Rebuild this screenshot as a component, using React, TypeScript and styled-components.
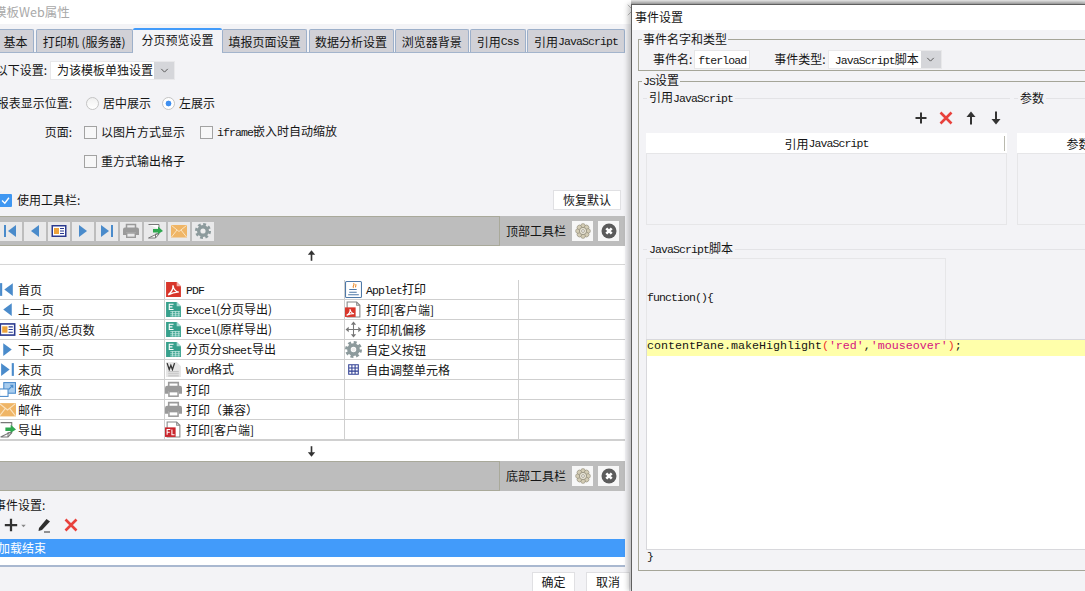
import React from 'react';
import styled, { createGlobalStyle } from 'styled-components';

const GlobalStyle = createGlobalStyle`
  html, body {
    margin: 0;
    padding: 0;
    background: #fff;
  }
  body {
    font-family: "Noto Sans CJK SC", "Liberation Sans", sans-serif;
    font-size: 12px;
    line-height: 16px;
    color: #151515;
  }
  * {
    box-sizing: border-box;
  }
`;

const Page = styled.div`
  display: flex;
  width: 1085px;
  height: 591px;
  overflow: hidden;
  background: #fff;
`;

/* ---------- left window ---------- */

const LeftWindow = styled.div`
  width: 631px;
  flex-shrink: 0;
  overflow: hidden;
`;

const LeftInner = styled.div`
  width: 638px;
  height: 591px;
  margin-left: -6px;
  display: flex;
  flex-direction: column;
`;

const TitleBar = styled.div`
  height: 24px;
  flex-shrink: 0;
  display: flex;
  align-items: center;
  justify-content: space-between;
  color: #a9a9a9;
  font-size: 12.5px;
  background: #fff;

  svg {
    margin-right: -8px;
    margin-top: -4px;
  }
`;

const LeftBody = styled.div`
  flex: 1;
  background: #f3f3f6;
  display: flex;
  flex-direction: column;
`;

const TabStrip = styled.div`
  height: 29px;
  padding: 5px 0 0 3px;
  display: flex;
  gap: 1.5px;
  border-bottom: 1px solid #a3b4cc;
  width: 631px;
`;

const Tab = styled.div<{ $w: number; $active?: boolean }>`
  width: ${(p) => p.$w}px;
  padding-top: 1px;
  display: flex;
  align-items: center;
  justify-content: center;
  white-space: nowrap;
  border: 1px solid #9db0ca;
  border-bottom: none;
  border-radius: 2px 2px 0 0;
  background: #d1d1d7;

  ${(p) =>
    p.$active &&
    `
    background: #f3f3f6;
    margin: -1px -1.5px -1px;
    padding: 0 0 4px;
    border: none;
    border-top: 2px solid #429bfa;
    position: relative;
  `}
`;

const Latin = styled.span`
  font-family: "Liberation Mono", monospace;
  font-size: 11.5px;
  letter-spacing: -0.9px;
`;

const FormRow = styled.div<{ $top: number; $indent?: number }>`
  height: 20px;
  margin-top: ${(p) => p.$top}px;
  padding-left: ${(p) => p.$indent ?? 0}px;
  display: flex;
  align-items: center;
  flex-shrink: 0;
  white-space: nowrap;
`;

const FieldLabel = styled.span<{ $w: number }>`
  width: ${(p) => p.$w}px;
  flex-shrink: 0;
  text-align: right;
`;

const SelectBox = styled.div<{ $w: number; $gap?: number }>`
  width: ${(p) => p.$w}px;
  height: 19px;
  margin-left: ${(p) => p.$gap ?? 0}px;
  display: flex;
  background: #fff;
  border: 1px solid #e8e8ea;
  flex-shrink: 0;
`;

const SelectValue = styled.span`
  flex: 1;
  padding-left: 6px;
  line-height: 15px;
  white-space: nowrap;
  overflow: hidden;
`;

const SelectArrow = styled.span`
  width: 20px;
  background: #d5d6da;
  display: flex;
  align-items: center;
  justify-content: center;
`;

const Radio = styled.span<{ $on?: boolean; $gap?: number }>`
  width: 13px;
  height: 13px;
  margin-left: ${(p) => p.$gap ?? 0}px;
  margin-right: 4px;
  border-radius: 50%;
  border: 1px solid #c4c4c4;
  background: ${(p) =>
    p.$on
      ? 'radial-gradient(circle, #3f8ff0 0 2.6px, #fff 3.2px)'
      : 'linear-gradient(#f0f0f0, #fff)'};
  flex-shrink: 0;
`;

const CheckBox = styled.span<{ $gap?: number }>`
  width: 13px;
  height: 13px;
  margin-left: ${(p) => p.$gap ?? 0}px;
  margin-right: 4px;
  border: 1px solid #a2a2a2;
  background: #f7f7f8;
  flex-shrink: 0;
`;

const CheckedBox = styled.span`
  width: 13px;
  height: 13px;
  margin-left: 5px;
  margin-right: 5px;
  border-radius: 1px;
  background: #3f97f2;
  display: flex;
  align-items: center;
  justify-content: center;
  flex-shrink: 0;
`;

const PlainButton = styled.div<{ $w: number; $right?: number }>`
  width: ${(p) => p.$w}px;
  height: 20px;
  margin-left: ${(p) => (p.$right !== undefined ? 'auto' : '0')};
  margin-right: ${(p) => p.$right ?? 0}px;
  background: #fff;
  border: 1px solid #e0e0e3;
  display: flex;
  align-items: center;
  justify-content: center;
  flex-shrink: 0;
`;

const Designer = styled.div`
  width: 631px;
  background: #fff;
  margin-top: 6px;
  flex-shrink: 0;
`;

const Band = styled.div`
  height: 30px;
  display: flex;
  align-items: center;
  background: #bdbdbd;
`;

const BandWell = styled.div`
  width: 506px;
  height: 30px;
  padding-left: 6px;
  display: flex;
  align-items: center;
  gap: 2px;
  border: 1px solid #a9a99a;
  border-left: none;
`;

const BandLabel = styled.span`
  margin-left: 6px;
  margin-right: 6px;
  white-space: nowrap;
`;

const ToolButton = styled.span`
  width: 22px;
  height: 19px;
  background: #e9e9ea;
  display: flex;
  align-items: center;
  justify-content: center;
`;

const BandButton = styled.span<{ $gap?: number }>`
  width: 21px;
  height: 20px;
  margin-left: ${(p) => p.$gap ?? 0}px;
  background: #f7f7f7;
  display: flex;
  align-items: center;
  justify-content: center;
`;

const ArrowRow = styled.div<{ $h: number; $line?: boolean }>`
  height: ${(p) => p.$h}px;
  display: flex;
  align-items: center;
  justify-content: center;
  padding-left: 3px;
  border-bottom: ${(p) => (p.$line ? '1px solid #d6d6d6' : 'none')};
`;

const ItemGrid = styled.div`
  margin-top: 15px;
  display: grid;
  grid-template-columns: 171px 180px 174px 106px;
  grid-auto-rows: 20px;
  border-bottom: 1px solid #d0d0d0;
`;

const ItemCell = styled.div<{ $first?: boolean; $last?: boolean }>`
  display: flex;
  align-items: center;
  gap: ${(p) => (p.$first ? 2 : 4)}px;
  padding-left: ${(p) => (p.$first ? 5 : 0)}px;
  border-bottom: 1px solid #cfcfcf;
  border-right: ${(p) => (p.$last ? 'none' : '1px solid #cfcfcf')};
  white-space: nowrap;
  overflow: hidden;
`;

const EventLabel = styled.div`
  height: 16px;
  margin-top: 6px;
  white-space: nowrap;
`;

const EventTools = styled.div`
  height: 20px;
  margin-top: 2px;
  padding-left: 8px;
  display: flex;
  align-items: center;
`;

const ToolSpacer = styled.span<{ $w: number }>`
  width: ${(p) => p.$w}px;
  flex-shrink: 0;
`;

const EventList = styled.div`
  width: 631px;
  height: 28px;
  margin-top: 4px;
  background: #fff;
  border-bottom: 2px solid #a9b8d0;
`;

const EventRow = styled.div`
  height: 18px;
  padding-left: 4px;
  line-height: 17px;
  background: #429bfa;
  color: #fff;
`;

const Footer = styled.div`
  margin-top: 5px;
  padding-right: 2px;
  display: flex;
  justify-content: flex-end;
  gap: 11px;
`;

/* ---------- event dialog ---------- */

const RightColumn = styled.div`
  flex: 1;
  min-width: 0;
  padding-top: 4px;
  background: linear-gradient(#e8e8e8, #a8a8a8 4px);
  position: relative;
`;

const Dialog = styled.div`
  height: 587px;
  overflow: hidden;
  border-left: 1px solid #5f5f5f;
  border-top: 1px solid #5f5f5f;
  box-shadow: -3px 0 5px rgba(0, 0, 0, 0.22);
  display: flex;
  flex-direction: column;
`;

const DialogTitle = styled.div`
  height: 25px;
  padding: 0 0 2px 3px;
  display: flex;
  align-items: center;
  background: #fff;
  flex-shrink: 0;
`;

const DialogBody = styled.div`
  flex: 1;
  width: 760px;
  padding-left: 6px;
  background: #f3f3f6;
`;

const Group = styled.fieldset<{ $top: number }>`
  margin: ${(p) => p.$top}px 0 0;
  padding: 0;
  min-width: 0;
  border: 1px solid #a5a598;
`;

const GroupTitle = styled.legend`
  margin-left: 3px;
  padding: 0 1px;
  line-height: 16px;
`;

const NameRow = styled.div`
  height: 23px;
  padding: 3px 0 0 14px;
  display: flex;
  align-items: flex-start;
  white-space: nowrap;
`;

const RowLabel = styled.span<{ $gap?: number }>`
  margin-left: ${(p) => p.$gap ?? 0}px;
  line-height: 17px;
`;

const NameInput = styled.div`
  width: 56px;
  height: 19px;
  margin-left: 2px;
  padding-left: 3px;
  line-height: 15px;
  background: #fff;
  border: 1px solid #e6e6e8;
  overflow: hidden;
`;

const SplitRow = styled.div`
  display: grid;
  grid-template-columns: 367px 124px;
  gap: 4px;
  padding-left: 4px;
`;

const SectionTitle = styled.div`
  height: 16px;
  display: flex;
  align-items: center;
  gap: 2px;
  white-space: nowrap;

  &::before {
    content: '';
    width: 4px;
    height: 1px;
    background: #e3e3e6;
  }
  &::after {
    content: '';
    flex: 1;
    height: 1px;
    background: #e3e3e6;
  }
`;

const ActionBar = styled.div`
  height: 24px;
  padding-right: 6px;
  display: flex;
  align-items: center;
  justify-content: flex-end;
  gap: 9px;
`;

const RefTable = styled.div<{ $offset: number; $w: number }>`
  width: ${(p) => p.$w}px;
  margin: 3px 0 0 ${(p) => p.$offset}px;
`;

const RefHeader = styled.div<{ $divider?: boolean }>`
  height: 20px;
  padding-top: 1px;
  background: #fff;
  display: flex;
  align-items: center;
  justify-content: center;
  white-space: nowrap;
  position: relative;

  ${(p) =>
    p.$divider &&
    `
    &::after {
      content: '';
      position: absolute;
      right: 2px;
      top: 3px;
      bottom: 2px;
      width: 1px;
      background: #b9b9ae;
    }
  `}
`;

const RefBody = styled.div`
  height: 72px;
  border: 1px solid #e6e6e8;
`;

const ScriptSection = styled.div`
  margin-top: 16px;
  padding-left: 4px;
`;

const FunctionBox = styled.div`
  width: 300px;
  height: 81px;
  margin: 1px 0 0 3px;
  padding-bottom: 2px;
  display: flex;
  align-items: center;
  border: 1px solid #e6e6e8;
  border-bottom: none;
`;

const Editor = styled.div`
  height: 211px;
  margin-left: 3px;
  background: #fff;
  border: 1px solid #d8d8dc;
  border-right: none;
`;

const CodeLine = styled.div`
  height: 16px;
  background: #ffffaa;
  font-family: "Liberation Mono", monospace;
  font-size: 11.67px;
  line-height: 12px;
  white-space: pre;
`;

const Paren = styled.span`
  color: #f0352b;
`;

const Str = styled.span`
  color: #d6127f;
`;

const ClosingBrace = styled.div`
  height: 20px;
  padding-left: 4px;
  line-height: 9px;
`;

/* ---------- icons ---------- */

const BLUE = '#4a8bcb';
const GRAY = '#9a9a9a';
const TEAL = '#37a08c';
const RED = '#d8362b';

const docPath = 'M2 1H11L14 4V15H2Z';
const petalAngles = [0, 45, 90, 135, 180, 225, 270, 315];

const glyphs: Record<string, React.ReactNode> = {
  first: (
    <>
      <rect x="1" y="2" width="2" height="12" fill={BLUE} />
      <path d="M13 2V14L5 8Z" fill={BLUE} />
    </>
  ),
  prev: <path d="M12 2V14L4 8Z" fill={BLUE} />,
  next: <path d="M4 2V14L12 8Z" fill={BLUE} />,
  last: (
    <>
      <path d="M2 2V14L10 8Z" fill={BLUE} />
      <rect x="12" y="2" width="2" height="12" fill={BLUE} />
    </>
  ),
  page: (
    <>
      <rect x="0.5" y="2" width="15" height="12" fill="#2b3a8f" />
      <rect x="2" y="3.5" width="12" height="9" fill="#fff" />
      <rect x="3" y="5" width="5" height="6" fill="#eda33b" />
      <path d="M9 5.5H13M9 8H13M9 10.5H13" stroke="#2b3a8f" />
    </>
  ),
  print: (
    <>
      <path d="M3.5 5V1.5H12.5V5" fill="none" stroke={GRAY} strokeWidth="1.5" />
      <path d="M0 6.5Q0 4.5 2 4.5H14Q16 4.5 16 6.5V12H13V9.5H3V12H0Z" fill={GRAY} />
      <rect x="3.7" y="10" width="8.6" height="4.3" fill="none" stroke={GRAY} strokeWidth="1.4" />
    </>
  ),
  export: (
    <>
      <path d="M1.5 1.5H12V6M12 10V11L8.5 15H1.5Z" fill="#fff" stroke="#777" />
      <path d="M8.5 15V11H12" fill="none" stroke="#777" />
      <path d="M6 6H11V3.5L16 8L11 11V9.5H6Z" fill="#2fa84f" />
    </>
  ),
  mail: (
    <>
      <rect x="0" y="2" width="16" height="12.5" fill="#efb566" />
      <path d="M0.5 2.5L8 8.5L15.5 2.5M0.5 14L6 7M15.5 14L10 7" fill="none" stroke="#fbe3bf" />
    </>
  ),
  gear: (
    <>
      <circle cx="8" cy="8" r="6.7" fill="none" stroke="#8c9a9c" strokeWidth="2.6" strokeDasharray="2.8 2.46" />
      <circle cx="8" cy="8" r="4.3" fill="none" stroke="#8c9a9c" strokeWidth="3.4" />
      <circle cx="8" cy="8" r="2" fill="#eee" />
    </>
  ),
  zoom: (
    <>
      <rect x="4.5" y="1.5" width="11" height="10" fill="#a9cdee" stroke={BLUE} />
      <path d="M9 8L13 4M10.5 4H13V6.5" fill="none" stroke={BLUE} />
      <rect x="0.5" y="7.5" width="8" height="7" fill="#fff" stroke={BLUE} />
    </>
  ),
  pdf: (
    <>
      <path d="M1 1H11L15 5V15H1Z" fill={RED} />
      <path d="M11 1V5H15Z" fill="#f3b0aa" />
      <path d="M3 13C6 11 8 7 7.5 4C8 8 10 10 13 10.5C9 10 6 11.5 3 13Z" fill="none" stroke="#fff" strokeWidth="1.3" />
    </>
  ),
  excel: (
    <>
      <path d="M1 1H11L15 5V15H1Z" fill={TEAL} />
      <path d="M11 1V5H15Z" fill="#a8dcd2" />
      <path d="M8 3H4V8H8M4 5.5H7" fill="none" stroke="#fff" />
      <path d="M5 10H14M5 12H14M5 14H14M7 9.5V14.5M10 9.5V14.5M13 9.5V14.5" stroke="#bfe6de" strokeWidth="0.8" />
    </>
  ),
  word: (
    <>
      <path d="M1 1H11L15 5V15H1Z" fill="#e6e6e6" />
      <path d="M2 2L4 8L5.5 4L7 8L9 2" fill="none" stroke="#333" strokeWidth="1.2" />
      <path d="M3 10H13M3 12H13M3 14H13" stroke="#c4c4c4" />
    </>
  ),
  pdfdoc: (
    <>
      <path d={docPath} fill="#fff" stroke="#888" />
      <path d="M11 1V4H14" fill="none" stroke="#888" />
      <rect x="0" y="6" width="10" height="9" fill={RED} />
      <path d="M1.5 13.5C3.5 12.5 5 10 4.8 7.5C5.2 10 6.5 11.5 8.5 12C6 11.5 4 12.5 1.5 13.5Z" fill="none" stroke="#fff" />
    </>
  ),
  flash: (
    <>
      <path d={docPath} fill="#fff" stroke="#888" />
      <path d="M11 1V4H14" fill="none" stroke="#888" />
      <rect x="0" y="6" width="10" height="9" fill="#c9252c" />
      <path d="M5 8H2V13M2 10.5H4.5M6.5 8V13H9" fill="none" stroke="#fff" />
    </>
  ),
  applet: (
    <>
      <rect x="0.5" y="0.5" width="15" height="15" rx="1" fill="#fff" stroke="#4f79a8" />
      <path d="M8 2C10 3.5 6.5 4.5 8 6.5M10 3C11 4 9.5 5 10 6" fill="none" stroke="#e88a2b" />
      <path d="M4 8H11M4 10.5H11M3 13H13" stroke="#4f79a8" />
    </>
  ),
  move: (
    <>
      <path d="M8 3V13M3 8H13" stroke="#777" />
      <path d="M8 0.5L5.5 3.5H10.5ZM8 15.5L5.5 12.5H10.5ZM0.5 8L3.5 5.5V10.5ZM15.5 8L12.5 5.5V10.5Z" fill="#777" />
    </>
  ),
  grid: (
    <path
      d="M3.5 3.5H12.5V12.5H3.5ZM3.5 6.5H12.5M3.5 9.5H12.5M6.5 3.5V12.5M9.5 3.5V12.5"
      fill="none"
      stroke="#2f3f94"
    />
  ),
  flower: (
    <>
      {petalAngles.map((a) => (
        <circle key={a} cx="8" cy="2.9" r="2.3" fill="#d3ccb4" stroke="#8f8a78" strokeWidth="0.6" transform={`rotate(${a} 8 8)`} />
      ))}
      <circle cx="8" cy="8" r="3.6" fill="#e8e4d6" stroke="#8f8a78" strokeWidth="0.8" />
      <circle cx="8" cy="8" r="1.4" fill="#fff" stroke="#8f8a78" strokeWidth="0.7" />
    </>
  ),
  remove: (
    <>
      <circle cx="8" cy="8" r="7.5" fill="#5b5b5b" />
      <path d="M5.3 5.3L10.7 10.7M10.7 5.3L5.3 10.7" stroke="#fff" strokeWidth="2.6" />
    </>
  ),
  plus: <path d="M8 2.5V13.5M2.5 8H13.5" stroke="#333" strokeWidth="2" />,
  cross: <path d="M2.5 2.5L13.5 13.5M13.5 2.5L2.5 13.5" stroke="#e8413c" strokeWidth="2.6" />,
  up: (
    <>
      <path d="M8 14.5V6" stroke="#333" strokeWidth="2" />
      <path d="M3.5 7L8 1.5L12.5 7Z" fill="#333" />
    </>
  ),
  down: (
    <>
      <path d="M8 1.5V10" stroke="#333" strokeWidth="2" />
      <path d="M3.5 9L8 14.5L12.5 9Z" fill="#333" />
    </>
  ),
  pencil: (
    <>
      <path d="M3 11L10.5 2L14 4.5L6 13L2.5 14Z" fill="#2e2e2e" />
      <path d="M8 15H14" stroke="#2e2e2e" />
    </>
  ),
  chevron: <path d="M4 6L8 10L12 6" fill="none" stroke="#555" strokeWidth="1.2" />,
  check: <path d="M3 8L7 12L13 4" fill="none" stroke="#fff" strokeWidth="2" />,
  close: <path d="M2 2L14 14M14 2L2 14" stroke="#b5b5b5" />,
  caret: <path d="M3 6H13L8 12Z" fill="#888" />,
};

const GlyphSvg = styled.svg`
  flex-shrink: 0;
`;

const Icon = ({ name, size = 16 }: { name: string; size?: number }) => (
  <GlyphSvg width={size} height={size} viewBox="0 0 16 16">
    {glyphs[name]}
  </GlyphSvg>
);

/* ---------- data ---------- */

const tabs: { w: number; label: React.ReactNode; active?: boolean }[] = [
  { w: 37, label: '基本' },
  { w: 97.5, label: '打印机 (服务器)' },
  { w: 89, label: '分页预览设置', active: true },
  { w: 85, label: '填报页面设置' },
  { w: 85, label: '数据分析设置' },
  { w: 73.5, label: '浏览器背景' },
  { w: 55.5, label: <>引用<Latin>Css</Latin></> },
  { w: 98, label: <>引用<Latin>JavaScript</Latin></> },
];

const toolbarIcons = ['first', 'prev', 'page', 'next', 'last', 'print', 'export', 'mail', 'gear'];

type Item = { icon: string; label: React.ReactNode } | null;

const items: Item[][] = [
  [
    { icon: 'first', label: '首页' },
    { icon: 'pdf', label: <Latin>PDF</Latin> },
    { icon: 'applet', label: <><Latin>Applet</Latin>打印</> },
  ],
  [
    { icon: 'prev', label: '上一页' },
    { icon: 'excel', label: <><Latin>Excel</Latin>(分页导出)</> },
    { icon: 'pdfdoc', label: '打印[客户端]' },
  ],
  [
    { icon: 'page', label: '当前页/总页数' },
    { icon: 'excel', label: <><Latin>Excel</Latin>(原样导出)</> },
    { icon: 'move', label: '打印机偏移' },
  ],
  [
    { icon: 'next', label: '下一页' },
    { icon: 'excel', label: <>分页分<Latin>Sheet</Latin>导出</> },
    { icon: 'gear', label: '自定义按钮' },
  ],
  [
    { icon: 'last', label: '末页' },
    { icon: 'word', label: <><Latin>Word</Latin>格式</> },
    { icon: 'grid', label: '自由调整单元格' },
  ],
  [{ icon: 'zoom', label: '缩放' }, { icon: 'print', label: '打印' }, null],
  [{ icon: 'mail', label: '邮件' }, { icon: 'print', label: '打印（兼容）' }, null],
  [{ icon: 'export', label: '导出' }, { icon: 'flash', label: '打印[客户端]' }, null],
];

const BandTail = ({ label }: { label: string }) => (
  <>
    <BandLabel>{label}</BandLabel>
    <BandButton><Icon name="flower" /></BandButton>
    <BandButton $gap={5}><Icon name="remove" /></BandButton>
  </>
);

const App = () => {
  return (
    <Page>
      <GlobalStyle />
      <LeftWindow>
        <LeftInner>
          <TitleBar>
            <span>模板Web属性</span>
            <Icon name="close" size={14} />
          </TitleBar>
          <LeftBody>
            <TabStrip>
              {tabs.map((tab, i) => (
                <Tab key={i} $w={tab.w} $active={tab.active}>
                  {tab.label}
                </Tab>
              ))}
            </TabStrip>

            <FormRow $top={7}>
              <FieldLabel $w={53}>以下设置:</FieldLabel>
              <SelectBox $w={125} $gap={3}>
                <SelectValue>为该模板单独设置</SelectValue>
                <SelectArrow><Icon name="chevron" size={13} /></SelectArrow>
              </SelectBox>
            </FormRow>
            <FormRow $top={13}>
              <FieldLabel $w={78}>报表显示位置:</FieldLabel>
              <Radio $gap={14} />
              <span>居中展示</span>
              <Radio $gap={11} $on />
              <span>左展示</span>
            </FormRow>
            <FormRow $top={9}>
              <FieldLabel $w={78}>页面:</FieldLabel>
              <CheckBox $gap={12} />
              <span>以图片方式显示</span>
              <CheckBox $gap={15} />
              <span><Latin>iframe</Latin>嵌入时自动缩放</span>
            </FormRow>
            <FormRow $top={9} $indent={90}>
              <CheckBox />
              <span>重方式输出格子</span>
            </FormRow>
            <FormRow $top={19}>
              <CheckedBox><Icon name="check" size={11} /></CheckedBox>
              <span>使用工具栏:</span>
              <PlainButton $w={68} $right={11}>恢复默认</PlainButton>
            </FormRow>

            <Designer>
              <Band>
                <BandWell>
                  {toolbarIcons.map((name) => (
                    <ToolButton key={name}><Icon name={name} /></ToolButton>
                  ))}
                </BandWell>
                <BandTail label="顶部工具栏" />
              </Band>
              <ArrowRow $h={19} $line><Icon name="up" size={13} /></ArrowRow>
              <ItemGrid>
                {items.map((row, r) =>
                  [...row, null].map((item, c) => (
                    <ItemCell key={`${r}-${c}`} $first={c === 0} $last={c === 3}>
                      {item && <Icon name={item.icon} size={17} />}
                      {item && <span>{item.label}</span>}
                    </ItemCell>
                  )),
                )}
              </ItemGrid>
              <ArrowRow $h={20}><Icon name="down" size={13} /></ArrowRow>
              <Band>
                <BandWell />
                <BandTail label="底部工具栏" />
              </Band>
            </Designer>

            <EventLabel>事件设置:</EventLabel>
            <EventTools>
              <Icon name="plus" size={18} />
              <Icon name="caret" size={7} />
              <ToolSpacer $w={9} />
              <Icon name="pencil" size={16} />
              <ToolSpacer $w={11} />
              <Icon name="cross" size={16} />
            </EventTools>
            <EventList>
              <EventRow>加载结束</EventRow>
            </EventList>
            <Footer>
              <PlainButton $w={43}>确定</PlainButton>
              <PlainButton $w={44}>取消</PlainButton>
            </Footer>
          </LeftBody>
        </LeftInner>
      </LeftWindow>

      <RightColumn>
        <Dialog>
          <DialogTitle>事件设置</DialogTitle>
          <DialogBody>
            <Group $top={1}>
              <GroupTitle>事件名字和类型</GroupTitle>
              <NameRow>
                <RowLabel>事件名:</RowLabel>
                <NameInput><Latin>fterload</Latin></NameInput>
                <RowLabel $gap={24}>事件类型:</RowLabel>
                <SelectBox $w={114} $gap={2}>
                  <SelectValue><Latin>JavaScript</Latin>脚本</SelectValue>
                  <SelectArrow><Icon name="chevron" size={13} /></SelectArrow>
                </SelectBox>
              </NameRow>
            </Group>
            <Group $top={1}>
              <GroupTitle><Latin>JS</Latin>设置</GroupTitle>
              <SplitRow>
                <div>
                  <SectionTitle><span>引用<Latin>JavaScript</Latin></span></SectionTitle>
                  <ActionBar>
                    <Icon name="plus" />
                    <Icon name="cross" />
                    <Icon name="up" />
                    <Icon name="down" />
                  </ActionBar>
                  <RefTable $offset={3} $w={361}>
                    <RefHeader $divider>引用<Latin>JavaScript</Latin></RefHeader>
                    <RefBody />
                  </RefTable>
                </div>
                <div>
                  <SectionTitle>参数</SectionTitle>
                  <ActionBar />
                  <RefTable $offset={3} $w={123}>
                    <RefHeader>参数</RefHeader>
                    <RefBody />
                  </RefTable>
                </div>
              </SplitRow>
              <ScriptSection>
                <SectionTitle><span><Latin>JavaScript</Latin>脚本</span></SectionTitle>
                <FunctionBox><Latin>function(){'{'}</Latin></FunctionBox>
                <Editor>
                  <CodeLine>
                    contentPane.makeHighlight<Paren>(</Paren>
                    <Str>'red'</Str>,<Str>'mouseover'</Str>
                    <Paren>)</Paren>;
                  </CodeLine>
                </Editor>
                <ClosingBrace><Latin>{'}'}</Latin></ClosingBrace>
              </ScriptSection>
            </Group>
          </DialogBody>
        </Dialog>
      </RightColumn>
    </Page>
  );
};

export default App;
